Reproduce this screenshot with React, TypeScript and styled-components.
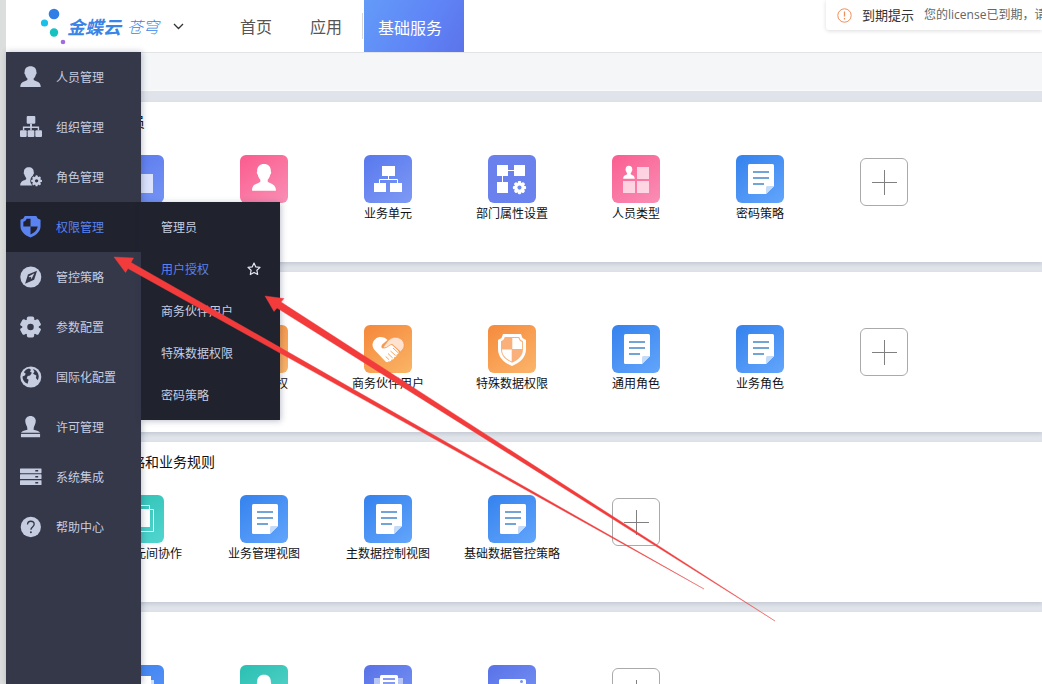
import React from "react";
import styled, { createGlobalStyle } from "styled-components";

const GlobalStyle = createGlobalStyle`
  * { box-sizing: border-box; }
  body {
    margin: 0;
    font-family: "Noto Sans CJK SC", "Noto Sans", sans-serif;
    font-size: 12px;
    color: #111;
  }
  button { font: inherit; border: 0; background: none; padding: 0; cursor: pointer; }
  a { text-decoration: none; color: inherit; }
  ul { list-style: none; margin: 0; padding: 0; }
`;

/* ---------- frame ---------- */

const Shell = styled.div`
  position: relative;
  display: flex;
  flex-direction: column;
  height: 100vh;
  padding-left: 6px;
  overflow: hidden;
  background: #dcdddd;
`;

const Header = styled.header`
  display: flex;
  flex: none;
  height: 52px;
  background: #fff;
`;

const Brand = styled.a`
  display: flex;
  align-items: center;
  width: 155px;
  padding-left: 33px;
  color: #3a84e6;
  white-space: nowrap;
`;

const BrandDots = styled.svg`
  flex: none;
  width: 28px;
  height: 40px;
`;

const BrandName = styled.strong`
  font-size: 18px;
  line-height: 24px;
  font-style: italic;
  font-weight: 700;
`;

const BrandProduct = styled.span`
  margin-left: 6px;
  font-size: 16px;
  line-height: 24px;
  font-style: italic;
  font-weight: 300;
`;

const SwitchButton = styled.button`
  display: flex;
  align-items: center;
  width: 60px;
  padding-left: 12px;
`;

const Tabs = styled.nav`
  display: flex;
  align-items: center;
`;

const Tab = styled.a`
  padding: 0 19px;
  font-size: 16px;
  line-height: 54px;
  white-space: nowrap;
  color: #555;
`;

const ActiveTab = styled(Tab)`
  height: 52px;
  padding: 0 22px 0 14px;
  color: #fff;
  background: linear-gradient(120deg, #639bf8 0%, #5f84f6 60%, #5c73ea 100%);
`;

const TabDivider = styled.span`
  width: 1px;
  height: 26px;
  margin: 0 1px;
  background: #d4d6da;
`;

const Notice = styled.div`
  display: flex;
  align-items: center;
  flex: 0 0 216px;
  height: 30px;
  margin-left: auto;
  padding-left: 11px;
  overflow: hidden;
  clip-path: inset(0 0 -8px -8px);
  white-space: nowrap;
  border-radius: 0 0 0 3px;
  box-shadow: 0 1px 4px rgba(0, 0, 0, 0.14);
  svg { flex: none; }
`;

const NoticeTitle = styled.span`
  margin-left: 10px;
  font-size: 13px;
  line-height: 30px;
  color: #333;
`;

const NoticeText = styled.span`
  margin-left: 10px;
  font-family: "Open Sans", "Noto Sans CJK SC", sans-serif;
  font-size: 12px;
  line-height: 32px;
  color: #666;
`;

const Workspace = styled.div`
  position: relative;
  flex: 1;
  min-height: 0;
`;

/* ---------- side menu, floats over the page ---------- */

const Sidebar = styled.nav`
  position: absolute;
  top: 0;
  bottom: 0;
  left: 0;
  z-index: 2;
  width: 135px;
  background: #353849;
  box-shadow: 1px 0 6px rgba(40, 50, 80, 0.3);
`;

const MenuEntry = styled.li`
  position: relative;
`;

const MenuButton = styled.button<{ $active?: boolean }>`
  display: flex;
  align-items: center;
  gap: 14px;
  width: 100%;
  height: 50px;
  padding-left: 14px;
  line-height: 18px;
  color: ${(p) => (p.$active ? "#5a82f0" : "#c6cde0")};
  background: ${(p) => (p.$active ? "#20222d" : "transparent")};
  svg { width: 22px; height: 22px; flex: none; }
`;

const Submenu = styled.ul`
  position: absolute;
  top: 0;
  left: 100%;
  width: 139px;
  padding: 4px 0;
  background: #20222d;
  box-shadow: 1px 1px 6px rgba(40, 50, 80, 0.3);
`;

const SubmenuButton = styled.button<{ $active?: boolean }>`
  display: flex;
  align-items: center;
  justify-content: space-between;
  width: 100%;
  height: 42px;
  padding: 0 19px 0 20px;
  line-height: 18px;
  color: ${(p) => (p.$active ? "#5a82f0" : "#c6cde0")};
`;

/* ---------- content ---------- */

const Content = styled.main`
  display: flex;
  flex-direction: column;
  gap: 10px;
  height: 100%;
  overflow: hidden;
  background: #e0e4ea;
`;

const Toolbar = styled.div`
  flex: none;
  height: 39px;
  margin-bottom: 1px;
  border-top: 1px solid #e2e4e7;
  border-bottom: 1px solid #f9fafb;
  background: #f4f6f8;
`;

const Card = styled.section`
  flex: none;
  height: 160px;
  padding: 9px 0 0 72px;
  background: #fff;
  box-shadow: 0 2px 4px rgba(90, 100, 130, 0.22);
`;

const CardTitle = styled.h2`
  margin: 0 0 0 11px;
  height: 44px;
  font-size: 14px;
  font-weight: 400;
  line-height: 20px;
`;

const TileRow = styled.div`
  display: grid;
  grid-template-columns: repeat(auto-fill, 124px);
  justify-items: center;
  align-items: start;
`;

const Tile = styled.button`
  display: flex;
  flex-direction: column;
  align-items: center;
  line-height: 20px;
  color: #111;
  white-space: nowrap;
`;

const TileIcon = styled.span<{ $from: string; $to: string }>`
  display: block;
  width: 48px;
  height: 48px;
  border-radius: 6px;
  background: linear-gradient(145deg, ${(p) => p.$from}, ${(p) => p.$to});
  svg { display: block; }
`;

const AddTile = styled.button`
  display: flex;
  align-items: center;
  justify-content: center;
  width: 48px;
  height: 48px;
  margin-top: 3px;
  border: 1px solid #aaa;
  border-radius: 6px;
`;

const Annotation = styled.svg`
  position: absolute;
  top: 0;
  left: 0;
  z-index: 5;
  pointer-events: none;
`;

/* ---------- drawings ---------- */

const PERSON =
  "M11 .3c4 0 6.300 2.400 6.100 6 .6.500.3 2-.5 2.500-.4 2-1.300 3.300-2.300 4.200v1.600c2.500 1.800 7.400 1.600 7.400 7.400H.3c0-5.800 4.900-5.600 7.400-7.400V13c-1-.9-1.900-2.200-2.300-4.200-.8-.5-1.100-2-.5-2.500C4.700 2.700 7 .3 11 .3z";

/* A cog in a 22-unit box: bars crossing at the centre, a disc and a hole. */
function Cog({ bars, thickness, hole }: { bars: number; thickness: number; hole: string }) {
  return (
    <>
      {Array.from({ length: bars }, (_, i) => (
        <rect
          key={i}
          x={11 - thickness / 2}
          y="0"
          width={thickness}
          height="22"
          rx="1.800"
          transform={`rotate(${(180 / bars) * i} 11 11)`}
        />
      ))}
      <circle cx="11" cy="11" r="8.600" />
      <circle cx="11" cy="11" r="3.400" fill={hole} />
    </>
  );
}

const menuIcons: Record<string, React.ReactNode> = {
  person: <path d={PERSON} />,
  org: (
    <>
      <rect x="7" y="0" width="9" height="8" rx="1" />
      <path d="M10.500 8h2v3h7.500v4h-1.500v-2.500H12.300V15h-1.600v-2.500H4.500V15H3v-4h7.500z" />
      <rect x="0" y="15" width="7" height="7" rx="1" />
      <rect x="8" y="15" width="7" height="7" rx="1" />
      <rect x="16" y="15" width="7" height="7" rx="1" />
    </>
  ),
  role: (
    <>
      <g transform="translate(0 1) scale(.84 .88)"><path d={PERSON} /></g>
      <circle cx="17.300" cy="15.500" r="6.600" fill="#353849" />
      <g transform="translate(11.600 9.800) scale(.52)">
        <Cog bars={4} thickness={4.6} hole="#353849" />
      </g>
    </>
  ),
  shield: (
    <>
      <path d="M5 0h12l1.500 2.500 3 1.300v6.700c0 5.500-4 9.500-10.500 12C4.500 20 .5 16 .5 10.500V3.800l3-1.300z" />
      <path fill="#20222d" d="M11 3v8H3.500V6l2-.8L7 3z M11 11h7.500c-.5 4-3.500 6.500-7.500 8.300z" />
    </>
  ),
  compass: (
    <>
      <circle cx="11.300" cy="11.500" r="11" />
      <path fill="#353849" d="M17.800 5l-3 9.500-9.500 4 3-9.500z" />
      <path fill="#c6cde0" d="M15 7.500l-3 6-3-2.500z" />
      <circle cx="10.800" cy="12.500" r="1" fill="#353849" />
    </>
  ),
  gear: <g transform="translate(0 .5)"><Cog bars={3} thickness={7.6} hole="#353849" /></g>,
  globe: (
    <>
      <circle cx="11.300" cy="11.500" r="11" />
      <path fill="#353849" d="M9.500 2.500l2 1.500-1 2 2 1-2 3-2.500.5L7 13l2 1.500L8 18.500c-3-.8-5.500-4-5.300-7.500L5 10l1-2-2-1.500C5.300 4.300 7 3 9.500 2.500z" />
      <path fill="#353849" d="M13.500 3.200c3.500 1 6 4 6.100 7.800-.1 1.500-.5 2.800-1 4l-2-2.500.5-2.500-3.500-2 1.500-2z" />
    </>
  ),
  stamp: (
    <>
      <path d="M11 0c3.300 0 5.500 2.300 5.500 5.300 0 3.500-2.300 5-2.300 9 2.800.7 5.300 1.200 6.800 3.200H1c1.500-2 4-2.500 6.800-3.200 0-4-2.300-5.500-2.300-9C5.500 2.300 7.700 0 11 0z" />
      <path d="M1 18.700h20v3.500H1z" />
    </>
  ),
  server: (
    <>
      <rect x="0" y="2.500" width="22.500" height="5" rx=".6" />
      <rect x="0" y="8.700" width="22.500" height="5" rx=".6" />
      <rect x="0" y="14.900" width="22.500" height="5" rx=".6" />
      <path fill="#353849" d="M16 4.300h3v1.500h-3zM16 10.500h3V12h-3zM16 16.700h3v1.500h-3z" />
    </>
  ),
  help: (
    <>
      <circle cx="11.300" cy="11.500" r="10.600" />
      <path fill="none" stroke="#353849" strokeWidth="1.400" d="M7.900 9C7.900 6.700 9.300 5.500 11.300 5.500s3.500 1.300 3.500 3.200c0 2.700-3.400 2.800-3.400 5.600" />
      <circle cx="11.400" cy="17" r="1" fill="#353849" />
    </>
  ),
};

const tileArt: Record<string, { from: string; to: string; art: React.ReactNode }> = {
  org: {
    from: "#5878ee", to: "#7f9af4",
    art: (
      <>
        <path fill="none" stroke="#fff" d="M24.500 20v4.500M15.500 28v-3.500h18V28" />
        <path fill="#fff" d="M18 11h13v10H18zM10 28h12v9H10zM26 28h12v9H26z" />
      </>
    ),
  },
  company: {
    from: "#5878ee", to: "#7694f4",
    art: <><path fill="#fff" d="M9 11h14v27H9z" /><path fill="#fff" opacity=".75" d="M23 19h14v19H23z" /></>,
  },
  person: {
    from: "#fb5b8e", to: "#f98fb5",
    art: <g transform="translate(11.700 8.700) scale(1.120 1.230)" fill="#fff"><path d={PERSON} /></g>,
  },
  dept: {
    from: "#6a80ec", to: "#6b83ee",
    art: (
      <>
        <path fill="none" stroke="#fff" d="M20 15.500h7M14.500 21v7" />
        <path fill="#fff" d="M9 10h11v11H9zM26 10h11v11H26zM9 27h11v11H9z" />
        <g transform="translate(24.900 26) scale(.6)" fill="#fff">
          <Cog bars={4} thickness={5.6} hole="#7289ee" />
        </g>
      </>
    ),
  },
  types: {
    from: "#fa5d90", to: "#f98fb6",
    art: (
      <>
        <g transform="translate(11 10.500) scale(.54 .6)" fill="#fff"><path d={PERSON} /></g>
        <path fill="#fff" opacity=".68" d="M25 12h12v12H25zM11 26h12v12H11zM25 26h12v12H25z" />
      </>
    ),
  },
  doc: {
    from: "#3482ee", to: "#62a5fb",
    art: (
      <>
        <path fill="#fff" d="M13.500 9h23a1.500 1.500 0 0 1 1.500 1.500V31l-8 8H13.500a1.500 1.500 0 0 1-1.500-1.500v-27A1.500 1.500 0 0 1 13.500 9z" />
        <path fill="#c5dcf9" d="M30 39v-6.500a1.500 1.500 0 0 1 1.500-1.500H38z" />
        <path stroke="#72a5d6" strokeWidth="1.800" d="M17 17h16M17 23h16M17 29h11" />
      </>
    ),
  },
  hands: {
    from: "#f5873a", to: "#fab566",
    art: (
      <>
        <path fill="#fff" d="M23.500 15c-3-3.500-9-4-12-1-4 3.500-4 8 0 12 3 3 7 7.500 10 10.500 1 1 2.500 1 3-.3 1.500.6 2.800-.2 3-1.700 1.600.3 2.700-.8 2.600-2.300 1.700.1 2.800-1.200 2.400-2.700 2.200 0 2.900-2.400 1.500-4L27 19c-3 1-4.500 4.500-8 4.500-2-.3-2-2.500-.8-4z" />
        <path fill="#ffe2cf" stroke="#f6944a" strokeWidth=".7" d="M22 18.500c2-3.700 6-6.500 10-6.200 6 .4 9.500 5.700 7.700 10.500-.6 1.500-1.700 2.700-3.200 4L28 19.300c-3 .3-4.500 4-8 3.600-1.500-.6 1-3.200 2-4.400z" />
        <path stroke="#f69a4d" fill="none" strokeWidth=".9" d="M29 23l5.500 5M26.500 26l5 4.500M24 28.500l4.700 4.500M21.700 31.500l3.500 3.300" />
      </>
    ),
  },
  shield: {
    from: "#f58a3c", to: "#fbb56b",
    art: (
      <>
        <path fill="#fff" d="M15 9h18l1.500 4 3.500 2v9c0 8-5.500 13.500-14 17-8.500-3.500-14-9-14-17v-9l3.500-2z" />
        <path fill="#f9b07a" d="M16.800 12h14.400l1.300 2.800L35 16.300V24c0 6.500-4 10.500-11 13.800C17 34.500 13 30.500 13 24v-7.700l2.500-1.500z" />
        <path fill="#fff" d="M24.300 13H30.500l1.300 2.700 2.300 1.300v7h-9.800zM23.700 24.500v12c-6-2.900-9.500-6-9.700-12z" />
      </>
    ),
  },
  copy: {
    from: "#2cbfb2", to: "#52d6cf",
    art: (
      <>
        <path fill="#fff" d="M11 14h23v18H11z" />
        <path fill="none" stroke="#fff" d="M10.500 10.500h23v4h4v22h-23v-4" />
      </>
    ),
  },
  bust: {
    from: "#2abfb2", to: "#60d6cd",
    art: <g transform="translate(11.700 9.500) scale(1.120 1.230)" fill="#fff"><path d={PERSON} /></g>,
  },
  cards: {
    from: "#3a80f0", to: "#5e98f8",
    art: <><path fill="#fff" d="M12 11h23v27H12z" /><path fill="#cfe2fd" d="M35 15h3v23h-3z" /></>,
  },
  printer: {
    from: "#5872e8", to: "#7c98f4",
    art: (
      <>
        <path fill="#b9c7f8" d="M10 13h29v23H10z" />
        <path fill="#fff" d="M17.500 10h15a1.500 1.500 0 0 1 1.500 1.500V19h2v17H14V19h2v-7.500a1.500 1.500 0 0 1 1.500-1.500z" />
        <path stroke="#5f7bea" strokeWidth="1.500" d="M19 14h12M19 18h12" />
      </>
    ),
  },
  window: {
    from: "#5872e8", to: "#7c98f4",
    art: (
      <>
        <path fill="#fff" d="M12.500 14h24a1.500 1.500 0 0 1 1.500 1.500V37H11V15.500a1.500 1.500 0 0 1 1.500-1.500z" />
        <circle cx="33.500" cy="16.500" r="1.500" fill="#7a93f0" />
      </>
    ),
  },
};

/* ---------- data ---------- */

const menu = [
  { icon: "person", label: "人员管理" },
  { icon: "org", label: "组织管理" },
  { icon: "role", label: "角色管理" },
  { icon: "shield", label: "权限管理", active: true },
  { icon: "compass", label: "管控策略" },
  { icon: "gear", label: "参数配置" },
  { icon: "globe", label: "国际化配置" },
  { icon: "stamp", label: "许可管理" },
  { icon: "server", label: "系统集成" },
  { icon: "help", label: "帮助中心" },
];

const submenu = ["管理员", "用户授权", "商务伙伴用户", "特殊数据权限", "密码策略"];

const cards: { title: string; tiles: [string, string][] }[] = [
  {
    title: "组织人员",
    tiles: [["company", "组织"], ["person", "人员"], ["org", "业务单元"], ["dept", "部门属性设置"], ["types", "人员类型"], ["doc", "密码策略"]],
  },
  {
    title: "权限",
    tiles: [["shield", "管理员"], ["shield", "用户授权"], ["hands", "商务伙伴用户"], ["shield", "特殊数据权限"], ["doc", "通用角色"], ["doc", "业务角色"]],
  },
  {
    title: "管控策略和业务规则",
    tiles: [["copy", "业务单元间协作"], ["doc", "业务管理视图"], ["doc", "主数据控制视图"], ["doc", "基础数据管控策略"]],
  },
  {
    title: "配置",
    tiles: [["cards", "参数"], ["bust", "许可"], ["printer", "打印"], ["window", "集成"]],
  },
];

export default function App() {
  return (
    <>
      <GlobalStyle />
      <Shell>
        <Header>
          <Brand href="#">
            <BrandDots viewBox="0 0 28 40" aria-hidden="true">
              <circle cx="15" cy="8" r="5.300" fill="#2f7fe6" />
              <circle cx="5.500" cy="17" r="3.600" fill="#1cbfe8" />
              <circle cx="15" cy="26.500" r="4.200" fill="#14c3c0" />
              <circle cx="24" cy="36" r="2.300" fill="#a06be0" />
            </BrandDots>
            <BrandName>金蝶云</BrandName>
            <BrandProduct>苍穹</BrandProduct>
          </Brand>
          <SwitchButton aria-label="切换">
            <svg width="11" height="7" viewBox="0 0 11 7" fill="none" stroke="#333" strokeWidth="1.300">
              <path d="M1 1l4.500 4.500L10 1" />
            </svg>
          </SwitchButton>
          <Tabs>
            <Tab href="#">首页</Tab>
            <Tab href="#">应用</Tab>
            <TabDivider />
            <ActiveTab href="#">基础服务</ActiveTab>
          </Tabs>
          <Notice role="status">
            <svg width="15" height="15" viewBox="0 0 15 15" fill="none" stroke="#ee8f5e">
              <circle cx="7.500" cy="7.500" r="6.700" />
              <path strokeWidth="1.300" d="M7.500 3.500v5M7.500 10v1.500" />
            </svg>
            <NoticeTitle>到期提示</NoticeTitle>
            <NoticeText>您的license已到期，请</NoticeText>
          </Notice>
        </Header>

        <Workspace>
          <Sidebar>
            <ul>
              {menu.map((m) => (
                <MenuEntry key={m.label}>
                  <MenuButton $active={m.active}>
                    <svg viewBox="0 0 23 23" fill="currentColor" aria-hidden="true">{menuIcons[m.icon]}</svg>
                    {m.label}
                  </MenuButton>
                  {m.active && (
                    <Submenu>
                      {submenu.map((s, i) => (
                        <li key={s}>
                          <SubmenuButton $active={i === 1}>
                            {s}
                            {i === 1 && (
                              <svg width="14" height="14" viewBox="0 0 14 14" fill="none" stroke="#e6e9f2" strokeWidth="1.200" strokeLinejoin="round">
                                <path d="M7 1l1.800 3.900 4.200.5-3.100 2.900.8 4.200L7 10.400l-3.700 2.100.8-4.200L1 5.400l4.200-.5z" />
                              </svg>
                            )}
                          </SubmenuButton>
                        </li>
                      ))}
                    </Submenu>
                  )}
                </MenuEntry>
              ))}
            </ul>
          </Sidebar>

          <Content>
            <Toolbar />
            {cards.map((c) => (
              <Card key={c.title}>
                <CardTitle>{c.title}</CardTitle>
                <TileRow>
                  {c.tiles.map(([icon, label]) => (
                    <Tile key={label}>
                      <TileIcon $from={tileArt[icon].from} $to={tileArt[icon].to}>
                        <svg width="48" height="48" viewBox="0 0 48 48" aria-hidden="true">{tileArt[icon].art}</svg>
                      </TileIcon>
                      {label}
                    </Tile>
                  ))}
                  <AddTile aria-label="添加">
                    <svg width="26" height="26" viewBox="0 0 26 26" stroke="#808080">
                      <path d="M13.500 1v25M1 13.500h25" />
                    </svg>
                  </AddTile>
                </TileRow>
              </Card>
            ))}
          </Content>
        </Workspace>

        <Annotation width="800" height="640" viewBox="0 0 800 640" fill="#f43b3b" stroke="#e84545" strokeWidth=".4" aria-hidden="true">
          <path d="M114 257L133.500 258 131 262.500 704 589 128 268.500 125.500 272.500z" />
          <path d="M265 296L284 298.500 281 302 775 621 277 308 274 311.500z" />
        </Annotation>
      </Shell>
    </>
  );
}
